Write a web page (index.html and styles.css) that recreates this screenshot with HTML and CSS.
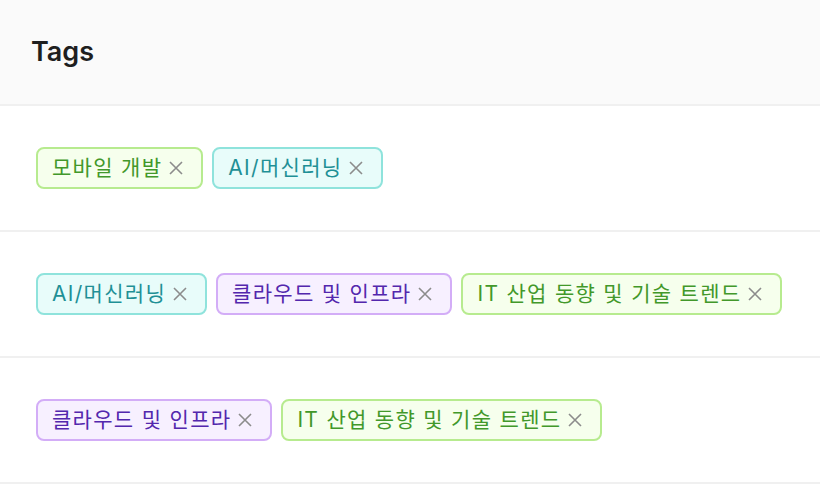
FILE: index.html
```html
<!DOCTYPE html>
<html lang="ko">
<head>
<meta charset="utf-8">
<link rel="stylesheet" href="styles.css">
</head>
<body>
<div class="table">
  <div class="head"><span class="title">Tags</span></div>
  <div class="row">
    <span class="tag green">모바일 개발<svg class="x" viewBox="0 0 16 16"><path d="M2 2L14 14M14 2L2 14"/></svg></span>
    <span class="tag cyan">AI/머신러닝<svg class="x" viewBox="0 0 16 16"><path d="M2 2L14 14M14 2L2 14"/></svg></span>
  </div>
  <div class="row">
    <span class="tag cyan">AI/머신러닝<svg class="x" viewBox="0 0 16 16"><path d="M2 2L14 14M14 2L2 14"/></svg></span>
    <span class="tag purple">클라우드 및 인프라<svg class="x" viewBox="0 0 16 16"><path d="M2 2L14 14M14 2L2 14"/></svg></span>
    <span class="tag green">IT 산업 동향 및 기술 트렌드<svg class="x" viewBox="0 0 16 16"><path d="M2 2L14 14M14 2L2 14"/></svg></span>
  </div>
  <div class="row">
    <span class="tag purple">클라우드 및 인프라<svg class="x" viewBox="0 0 16 16"><path d="M2 2L14 14M14 2L2 14"/></svg></span>
    <span class="tag green">IT 산업 동향 및 기술 트렌드<svg class="x" viewBox="0 0 16 16"><path d="M2 2L14 14M14 2L2 14"/></svg></span>
  </div>
</div>
</body>
</html>
```
FILE: styles.css
```css
html, body {
  margin: 0;
  padding: 0;
  background: #ffffff;
}
body {
  font-family: Inter, "Noto Sans CJK KR", sans-serif;
  color: rgba(0, 0, 0, 0.88);
}
.table {
  width: 820px;
}
.head {
  height: 104px;
  background: #fafafa;
  border-bottom: 2px solid #f0f0f0;
  display: flex;
  align-items: center;
  padding-left: 31px;
  box-sizing: content-box;
}
.title {
  font-size: 27px;
  font-weight: 600;
  color: #1f1f1f;
  margin-top: -2px;
}
.row {
  height: 124px;
  border-bottom: 2px solid #f0f0f0;
  display: flex;
  align-items: center;
  gap: 9px;
  padding-left: 36px;
}
.tag {
  display: inline-flex;
  align-items: center;
  height: 42px;
  box-sizing: border-box;
  padding: 0 17px 0 14px;
  border: 2px solid;
  border-radius: 8px;
  font-size: 21px;
  letter-spacing: 1.3px;
  line-height: 38px;
  white-space: nowrap;
}
.x {
  width: 16px;
  height: 16px;
  margin-left: 6px;
  fill: none;
  stroke: #8c8c8c;
  stroke-width: 1.6;
}
.green {
  background: #f6ffed;
  border-color: #b7eb8f;
  color: #42982a;
}
.cyan {
  background: #e8fcfa;
  border-color: #8fe3dc;
  color: #1f9096;
}
.purple {
  background: #f7f0ff;
  border-color: #d3adf7;
  color: #5327ad;
}
```
